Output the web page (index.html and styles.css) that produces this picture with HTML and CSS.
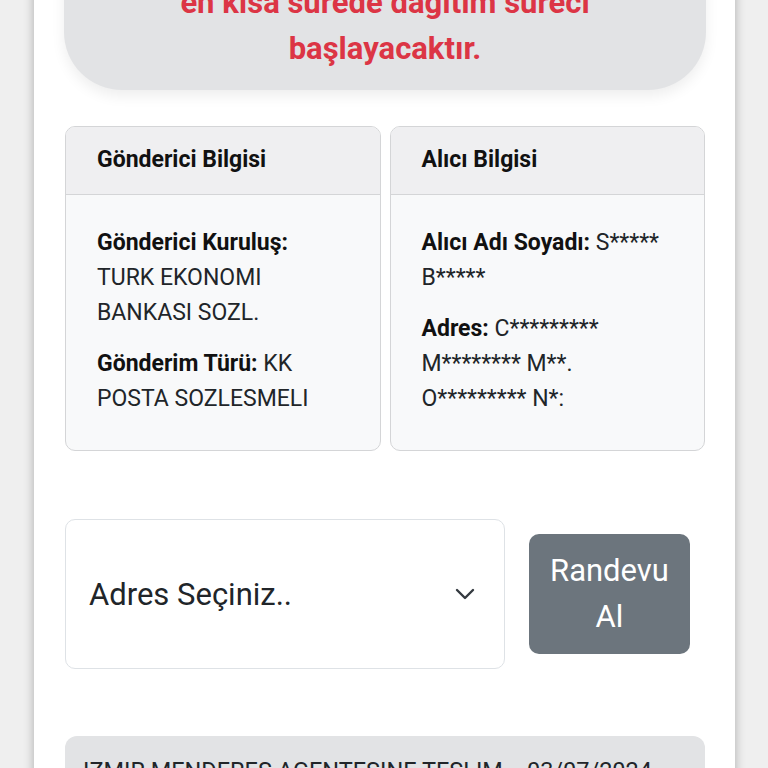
FILE: index.html
```html
<!DOCTYPE html>
<html lang="tr">
<head>
<meta charset="utf-8">
<title>Gönderi Takip</title>
<link rel="stylesheet" href="styles.css">
</head>
<body>
<main class="panel">
  <div class="alert">
    <p>en kısa sürede dağıtım süreci başlayacaktır.</p>
  </div>

  <section class="cards">
    <div class="card">
      <div class="card-header">Gönderici Bilgisi</div>
      <div class="card-body">
        <p><b>Gönderici Kuruluş:</b> TURK EKONOMI BANKASI SOZL.</p>
        <p><b>Gönderim Türü:</b> KK POSTA SOZLESMELI</p>
      </div>
    </div>
    <div class="card">
      <div class="card-header">Alıcı Bilgisi</div>
      <div class="card-body">
        <p><b>Alıcı Adı Soyadı:</b> S***** B*****</p>
        <p><b>Adres:</b> C********* M******** M**. O********* N*:</p>
      </div>
    </div>
  </section>

  <section class="booking">
    <div class="select">
      <span class="select-label">Adres Seçiniz..</span>
      <svg class="chevron" width="20" height="12" viewBox="0 0 20 12" aria-hidden="true">
        <path d="M2 2 L10 10 L18 2" fill="none" stroke="#343a40" stroke-width="2.4" stroke-linecap="round" stroke-linejoin="round"/>
      </svg>
    </div>
    <button class="btn">Randevu Al</button>
  </section>

  <section class="history">
    <div class="history-row">
      <span class="history-text">IZMIR MENDERES AGENTESINE TESLIM</span>
      <span class="history-date">03/07/2024</span>
    </div>
  </section>
</main>
</body>
</html>
```

FILE: styles.css
```css
html, body {
  margin: 0;
  padding: 0;
}

body {
  background: #efefef;
  font-family: Roboto, "Noto Sans", "Liberation Sans", sans-serif;
  color: #212529;
  height: 768px;
  overflow: hidden;
}

.panel {
  margin-left: 34px;
  width: 701px;
  min-height: 900px;
  background: #ffffff;
  box-shadow: 0 0 10px rgba(0, 0, 0, 0.28);
  padding: 0 30px 0 31px;
  box-sizing: border-box;
}

.alert {
  margin: -40px -1px 0 -1px;
  padding: 20px 40px 18px;
  background: #e2e3e5;
  border-radius: 0 0 58px 58px;
  box-shadow: 0 6px 14px rgba(0, 0, 0, 0.07);
  text-align: center;
}

.alert p {
  margin: 0 auto;
  max-width: 470px;
  color: #dc3545;
  font-weight: 700;
  font-size: 31px;
  line-height: 46px;
}

.cards {
  margin-top: 36px;
  display: grid;
  grid-template-columns: 1fr 1fr;
  gap: 9px;
}

.card {
  border: 1px solid #d4d5d7;
  border-radius: 10px;
  background: #f8f9fa;
  overflow: hidden;
}

.card-header {
  background: #efeff1;
  border-bottom: 1px solid #d4d5d7;
  padding: 19px 31px 20px;
  font-size: 23px;
  line-height: 28px;
  font-weight: 700;
  color: #111;
}

.card-body {
  padding: 30px 31px 34px;
  font-size: 23px;
  line-height: 35px;
}

.card-body p {
  margin: 0 0 16px;
}

.card-body p:last-child {
  margin-bottom: 0;
}

.card-body b {
  color: #111;
}

.booking {
  margin-top: 68px;
  display: grid;
  grid-template-columns: 440px 161px;
  gap: 24px;
  align-items: center;
}

.select {
  height: 150px;
  box-sizing: border-box;
  border: 1px solid #dee2e6;
  border-radius: 10px;
  background: #fff;
  display: flex;
  align-items: center;
  justify-content: space-between;
  padding: 0 29px 0 23px;
}

.select-label {
  font-size: 31px;
  color: #212529;
}

.chevron {
  display: block;
}

.btn {
  height: 120px;
  border: none;
  border-radius: 10px;
  background: #6c757d;
  color: #fff;
  font-family: Roboto, "Noto Sans", "Liberation Sans", sans-serif;
  font-size: 31px;
  line-height: 46px;
  padding: 14px 16px;
}

.history {
  margin-top: 67px;
}

.history-row {
  background: #e2e3e5;
  border-radius: 12px;
  padding: 20px 53px 20px 18px;
  display: flex;
  justify-content: space-between;
  font-size: 23.5px;
  line-height: 30px;
  color: #212529;
}
```
